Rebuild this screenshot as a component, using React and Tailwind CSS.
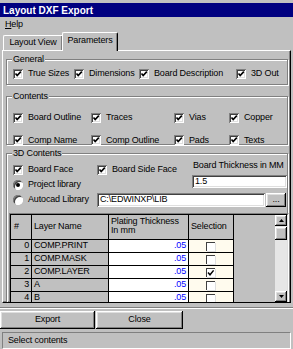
import React from 'react';

const raised = 'shadow-[inset_-1px_-1px_0_#000000,inset_1px_1px_0_#ffffff,inset_-2px_-2px_0_#808080,inset_2px_2px_0_#dfdfdf]';
const sunken = 'shadow-[inset_1px_1px_0_#808080,inset_-1px_-1px_0_#ffffff,inset_2px_2px_0_#404040,inset_-2px_-2px_0_#dfdfdf]';

function Check({ on = true }) {
  return (
    <span className={`relative w-[10px] h-[10px] shrink-0 bg-white ${sunken}`}>
      {on && (
        <svg className="absolute left-[1px] top-[1px]" width="8" height="8" viewBox="0 0 8 8">
          <path d="M1.5 3.5 L3.2 5.6 L6.8 1.6" fill="none" stroke="#000" strokeWidth="1.6" />
        </svg>
      )}
    </span>
  );
}

function Radio({ on }) {
  return (
    <span className="w-[10px] h-[10px] shrink-0 rounded-full bg-white shadow-[inset_1px_1px_0_#808080,inset_-1px_-1px_0_#ffffff,inset_2px_2px_0_#404040] flex items-center justify-center">
      {on && <span className="w-[4px] h-[4px] rounded-full bg-black" />}
    </span>
  );
}

function Group({ label, className, children }) {
  return (
    <div className={`relative border border-[#808080] shadow-[inset_1px_1px_0_#ffffff,1px_1px_0_#ffffff] ${className}`}>
      <span className="absolute -top-[7px] left-[5px] px-[1px] bg-[#c0c0c0] leading-[12px]">{label}</span>
      {children}
    </div>
  );
}

const layers = [
  { n: 0, name: 'COMP.PRINT', sel: false },
  { n: 1, name: 'COMP.MASK', sel: false },
  { n: 2, name: 'COMP.LAYER', sel: true },
  { n: 3, name: 'A', sel: false },
  { n: 4, name: 'B', sel: false },
];

function CellCheck({ on }) {
  return (
    <span className="relative w-[9px] h-[9px] bg-white border-t border-l border-[#404040] shadow-[1px_1px_0_#dfdfdf]">
      {on && (
        <svg className="absolute left-0 top-0" width="8" height="8" viewBox="0 0 8 8">
          <path d="M1 3.5 L3 5.8 L6.6 1.4" fill="none" stroke="#000" strokeWidth="1.5" />
        </svg>
      )}
    </span>
  );
}

export default function App() {
  return (
    <div className="w-[293px] h-[349px] bg-[#c0c0c0] font-['Liberation_Sans',Arial,sans-serif] text-[9px] tracking-[-0.15px] text-black overflow-hidden flex flex-col select-none">
      <div className="mt-[3px] h-[14px] bg-[#000080] flex items-center pl-[3px] text-white font-bold text-[10px] tracking-normal">
        Layout DXF Export
      </div>

      <div className="h-[15px] flex items-center pl-[5px]">
        <span><span className="underline">H</span>elp</span>
      </div>

      <div className="h-[18px] flex items-end pl-[3px]">
        <div className="w-[59px] h-[15px] border-t border-l border-white rounded-tl-[2px] shadow-[inset_-1px_0_0_#808080] flex items-center justify-center">
          Layout View
        </div>
        <div className="relative z-10 w-[56px] h-[19px] -mb-[1px] bg-[#c0c0c0] border-t border-l border-white border-r border-r-black rounded-t-[2px] shadow-[inset_-1px_0_0_#808080] flex items-center justify-center pb-[2px]">
          Parameters
        </div>
      </div>

      <div className="mx-[2px] h-[253px] border border-white border-r-black border-b-black shadow-[inset_-1px_-1px_0_#808080] overflow-hidden pl-[3px] pr-[2px]">
        <Group label="General" className="mt-[8px] h-[26px]">
          <div className="flex items-center pt-[7px] pl-[6px]">
            <div className="w-[61px] flex items-center gap-[5px]"><Check />True Sizes</div>
            <div className="w-[65px] flex items-center gap-[5px]"><Check />Dimensions</div>
            <div className="w-[97px] flex items-center gap-[5px]"><Check />Board Description</div>
            <div className="flex items-center gap-[5px]"><Check />3D Out</div>
          </div>
        </Group>

        <Group label="Contents" className="mt-[11px] h-[49px]">
          <div className="flex items-center pt-[14px] pl-[6px]">
            <div className="w-[78px] flex items-center gap-[5px]"><Check />Board Outline</div>
            <div className="w-[83px] flex items-center gap-[5px]"><Check />Traces</div>
            <div className="w-[55px] flex items-center gap-[5px]"><Check />Vias</div>
            <div className="flex items-center gap-[5px]"><Check />Copper</div>
          </div>
          <div className="flex items-center mt-[9px] pl-[6px]">
            <div className="w-[78px] flex items-center gap-[5px]"><Check />Comp Name</div>
            <div className="w-[83px] flex items-center gap-[5px]"><Check />Comp Outline</div>
            <div className="w-[55px] flex items-center gap-[5px]"><Check />Pads</div>
            <div className="flex items-center gap-[5px]"><Check />Texts</div>
          </div>
        </Group>

        <Group label="3D Contents" className="mt-[8px] h-[160px]">
          <div className="flex h-[36px]">
            <div className="w-[185px] pl-[6px] pt-[11px]">
              <div className="h-[10px] flex items-center">
                <div className="w-[84px] flex items-center gap-[5px]"><Check />Board Face</div>
                <div className="flex items-center gap-[5px]"><Check />Board Side Face</div>
              </div>
              <div className="h-[10px] mt-[5px] flex items-center gap-[5px]"><Radio on />Project library</div>
            </div>
            <div className="pt-[6px]">
              <div className="leading-[11px] pl-[1px]">Board Thickness in MM</div>
              <div className={`mt-[4px] h-[13px] w-[95px] bg-white ${sunken} flex items-center pl-[3px]`}>1.5</div>
            </div>
          </div>

          <div className="mt-[3px] h-[14px] flex items-center pl-[6px]">
            <div className="w-[84px] flex items-center gap-[5px]"><Radio />Autocad Library</div>
            <div className={`h-[14px] w-[168px] bg-white ${sunken} flex items-center pl-[3px]`}>C:\EDWINXP\LIB</div>
            <div className={`ml-[1px] h-[14px] w-[20px] ${raised} flex items-center justify-center pb-[1px]`}>...</div>
          </div>

          <div className="mt-[6px] ml-[2px] w-[280px] h-[92px] border border-[#808080] border-r-white border-b-white overflow-hidden">
            <div className="h-full border border-black border-r-[#dfdfdf] border-b-[#dfdfdf] flex bg-[#c0c0c0]">
              <div className="flex-1 flex flex-col">
                <div className="h-[25px] flex shrink-0">
                  <div className="w-[21px] border-r border-b border-black flex items-center pl-[3px]">#</div>
                  <div className="w-[77px] border-r border-b border-black flex items-center pl-[2px]">Layer Name</div>
                  <div className="w-[80px] border-r border-b border-black pl-[2px] pt-[2px] leading-[9px]">Plating Thickness<br />In mm</div>
                  <div className="w-[45px] border-r border-b border-black flex items-center pl-[2px]">Selection</div>
                </div>
                {layers.map(l => (
                  <div key={l.n} className="h-[13px] flex shrink-0">
                    <div className="w-[21px] border-r border-b border-black flex items-center justify-end pr-[2px]">{l.n}</div>
                    <div className="w-[77px] border-r border-b border-black flex items-center pl-[2px]">{l.name}</div>
                    <div className="w-[80px] border-r border-b border-black bg-white text-[#0000ff] flex items-center justify-end pr-[2px]">.05</div>
                    <div className="w-[45px] border-r border-b border-black bg-[#fffbee] flex items-center pl-[17px]">
                      <CellCheck on={l.sel} />
                    </div>
                  </div>
                ))}
              </div>
              <div className="w-[12px] bg-[#e6e6e6] flex flex-col">
                <div className={`h-[11px] bg-[#c0c0c0] ${raised} flex items-center justify-center`}>
                  <svg width="5" height="3" viewBox="0 0 5 3"><path d="M2.5 0 L5 3 L0 3 Z" fill="#000" /></svg>
                </div>
                <div className={`mt-[1px] h-[13px] bg-[#c0c0c0] ${raised}`} />
                <div className="flex-1" />
                <div className={`mb-[1px] h-[11px] bg-[#c0c0c0] ${raised} flex items-center justify-center`}>
                  <svg width="5" height="3" viewBox="0 0 5 3"><path d="M0 0 L5 0 L2.5 3 Z" fill="#000" /></svg>
                </div>
              </div>
            </div>
          </div>
        </Group>
      </div>

      <div className="mt-[4px] h-[2px] border-t border-[#808080] border-b border-b-white" />

      <div className="mt-[2px] h-[18px] flex">
        <div className={`w-[95px] ${raised} flex items-center justify-center`}>Export</div>
        <div className={`ml-[1px] w-[87px] ${raised} flex items-center justify-center`}>Close</div>
      </div>

      <div className="mt-[3px] mx-[2px] h-[17px] border border-[#808080] border-r-white border-b-white flex items-center pl-[5px]">
        Select contents
      </div>
    </div>
  );
}
